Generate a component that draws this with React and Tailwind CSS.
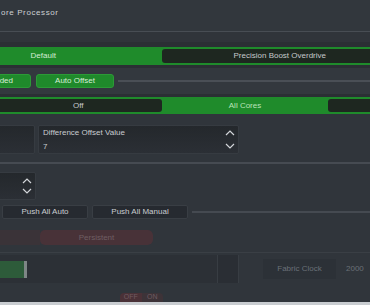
const ChevronUp = () => (
    <svg width="10" height="6" viewBox="0 0 10 6" fill="none">
        <polyline points="1,5 5,1 9,5" stroke="#d3d6da" strokeWidth="1.2" />
    </svg>
)

const ChevronDown = () => (
    <svg width="10" height="6" viewBox="0 0 10 6" fill="none">
        <polyline points="1,1 5,5 9,1" stroke="#d3d6da" strokeWidth="1.2" />
    </svg>
)

export default function App() {
    return (
        <div
            className="w-[370px] h-[305px] overflow-hidden bg-[#30353b] flex flex-col text-[8px] text-[#c9ccd0]"
            style={{ fontFamily: '"Liberation Sans", Arial, sans-serif' }}
        >
            {/* header */}
            <div className="h-[31px] shrink-0 bg-[#32373d] flex items-center">
                <span className="ml-[1px] tracking-[0.6px] text-[#cdd0d4] -mt-[6px]">ore Processor</span>
            </div>
            <div className="h-px shrink-0 bg-[#484d54]" />
            <div className="h-[10px] shrink-0 bg-[#30343a]" />
            <div className="h-[5px] shrink-0 bg-[#2b2f34]" />

            {/* mode segmented */}
            <div className="shrink-0 -ml-[77px] w-[477px] h-[18px] p-[2px] bg-[#1f8b2b] rounded-[3px] flex">
                <div className="flex-1 flex items-center justify-center text-[#d3ecd3]">Default</div>
                <div className="flex-1 flex items-center justify-center bg-[#1e2720] rounded-[3px] text-[#c6c9cc]">
                    Precision Boost Overdrive
                </div>
            </div>

            <div className="h-[3px] shrink-0 bg-[#2b2f34]" />
            <div className="h-[26px] shrink-0 bg-[#33383e] flex items-center">
                <div className="-ml-[47px] w-[78px] h-[14px] rounded-[3px] bg-[#1f8a2b] border border-[#2c9a37] flex items-center justify-end pr-[17px] text-[#d6edd6]">
                    ded
                </div>
                <div className="ml-[5px] w-[78px] h-[14px] rounded-[3px] bg-[#1f8a2b] border border-[#2c9a37] flex items-center justify-center text-[#d6edd6]">
                    Auto Offset
                </div>
                <div className="flex-1 ml-[4px] h-[2px] bg-[#4a4f56]" />
            </div>
            <div className="h-[3px] shrink-0 bg-[#2b2f34]" />

            {/* core segmented */}
            <div className="shrink-0 -ml-[7px] w-[504px] h-[17px] p-[2px] bg-[#1f8b2b] rounded-[3px] flex">
                <div className="flex-1 flex items-center justify-center bg-[#1e2720] rounded-[3px] text-[#c6c9cc]">Off</div>
                <div className="flex-1 flex items-center justify-center text-[#b9e3b9]">All Cores</div>
                <div className="flex-1 bg-[#1e2720] rounded-[3px]" />
            </div>

            <div className="h-[11px] shrink-0" />

            {/* offset panels */}
            <div className="h-[29px] shrink-0 flex gap-[3px]">
                <div className="-ml-[10px] w-[45px] bg-gradient-to-b from-[#24282c] to-[#2b2f35] border border-[#363b41] rounded-[2px]" />
                <div className="w-[201px] bg-gradient-to-b from-[#24282c] to-[#2b2f35] border border-[#363b41] rounded-[2px] flex">
                    <div className="flex-1 flex flex-col pl-[4px] pt-[2px]">
                        <span className="leading-[10px]">Difference Offset Value</span>
                        <span className="leading-[10px] mt-[4px]">7</span>
                    </div>
                    <div className="w-[16px] flex flex-col items-center justify-between py-[4px]">
                        <ChevronUp />
                        <ChevronDown />
                    </div>
                </div>
            </div>

            <div className="h-[8px] shrink-0" />
            <div className="h-[2px] shrink-0 bg-[#464b52]" />
            <div className="h-[8px] shrink-0" />

            <div className="h-[28px] shrink-0 flex">
                <div className="-ml-[10px] w-[46px] bg-gradient-to-b from-[#24282c] to-[#2b2f35] border border-[#363b41] rounded-[2px] flex justify-end">
                    <div className="w-[16px] flex flex-col items-center justify-between py-[5px]">
                        <ChevronUp />
                        <ChevronDown />
                    </div>
                </div>
            </div>

            <div className="h-[5px] shrink-0" />

            {/* push buttons */}
            <div className="h-[14px] shrink-0 flex items-center pl-[2px]">
                <div className="w-[86px] h-full bg-[#262a30] border border-[#393e44] rounded-[2px] flex items-center justify-center">
                    Push All Auto
                </div>
                <div className="ml-[4px] w-[96px] h-full bg-[#262a30] border border-[#393e44] rounded-[2px] flex items-center justify-center">
                    Push All Manual
                </div>
                <div className="flex-1 ml-[4px] h-[2px] bg-[#454a51]" />
            </div>

            <div className="h-[11px] shrink-0" />

            {/* faded section */}
            <div className="h-[15px] shrink-0 -ml-[73px] w-[226px] flex rounded-[5px] overflow-hidden">
                <div className="flex-1 bg-[#3a3338]" />
                <div className="flex-1 bg-[#483238] rounded-[5px] flex items-center justify-center text-[#6f5e63]">
                    Persistent
                </div>
            </div>

            <div className="h-[7px] shrink-0" />
            <div className="h-px shrink-0 bg-[#3a3f45]" />
            <div className="h-[2px] shrink-0" />

            <div className="h-[28px] shrink-0 flex">
                <div className="w-[217px] flex items-center bg-[#2c3036]">
                    <div className="w-[24px] h-[17px] bg-[#2d5b3a]" />
                    <div className="w-[3px] h-[17px] bg-[#7e8686]" />
                </div>
                <div className="w-px bg-[#383d43]" />
                <div className="w-[20px] bg-[#2a2e34]" />
                <div className="w-px bg-[#383d43]" />
                <div className="flex-1 flex items-center pl-[24px]">
                    <div className="w-[73px] h-[20px] bg-[#2c3137] flex items-center justify-center text-[#6a7077]">
                        Fabric Clock
                    </div>
                    <span className="ml-[10px] text-[#6a7077]">2000</span>
                </div>
            </div>

            <div className="h-[10px] shrink-0" />
            <div className="h-[9px] shrink-0 flex pl-[120px]">
                <div className="w-[43px] h-full flex rounded-t-[4px] overflow-hidden text-[7px] text-[#6e5b61]">
                    <div className="flex-1 bg-[#4a3137] flex items-end justify-center">OFF</div>
                    <div className="flex-1 bg-[#3d3338] flex items-end justify-center">ON</div>
                </div>
            </div>
            <div className="flex-1 bg-[#c9cdd1]" />
        </div>
    )
}
